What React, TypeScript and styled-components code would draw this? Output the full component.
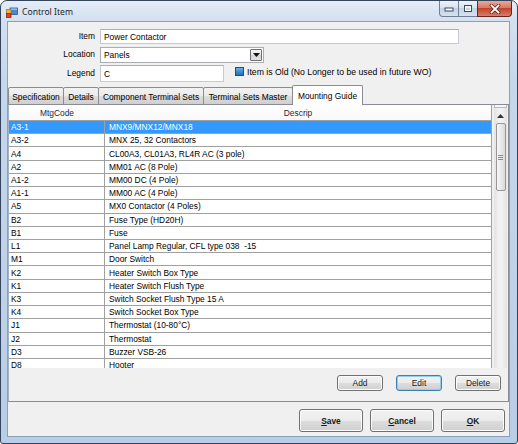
import React from "react";
import styled, { createGlobalStyle } from "styled-components";

const GlobalStyle = createGlobalStyle`
  html, body {
    margin: 0;
    padding: 0;
    background: #ffffff;
  }
  body {
    font-family: "Liberation Sans", Arial, sans-serif;
  }
`;

interface MountingRow {
  code: string;
  descrip: string;
}

const rows: MountingRow[] = [
  { code: "A3-1", descrip: "MNX9/MNX12/MNX18" },
  { code: "A3-2", descrip: "MNX 25, 32 Contactors" },
  { code: "A4", descrip: "CL00A3, CL01A3, RL4R AC (3 pole)" },
  { code: "A2", descrip: "MM01 AC (8 Pole)" },
  { code: "A1-2", descrip: "MM00 DC (4 Pole)" },
  { code: "A1-1", descrip: "MM00 AC (4 Pole)" },
  { code: "A5", descrip: "MX0 Contactor (4 Poles)" },
  { code: "B2", descrip: "Fuse Type (HD20H)" },
  { code: "B1", descrip: "Fuse" },
  { code: "L1", descrip: "Panel Lamp Regular, CFL type 038  -15" },
  { code: "M1", descrip: "Door Switch" },
  { code: "K2", descrip: "Heater Switch Box Type" },
  { code: "K1", descrip: "Heater Switch Flush Type" },
  { code: "K3", descrip: "Switch Socket Flush Type 15 A" },
  { code: "K4", descrip: "Switch Socket Box Type" },
  { code: "J1", descrip: "Thermostat (10-80°C)" },
  { code: "J2", descrip: "Thermostat" },
  { code: "D3", descrip: "Buzzer VSB-26" },
  { code: "D8", descrip: "Hooter" },
];

const tabs = [
  { title: "Specification", width: 56 },
  { title: "Details", width: 36 },
  { title: "Component Terminal Sets", width: 106 },
  { title: "Terminal Sets Master", width: 90 },
  { title: "Mounting Guide", width: 71 },
];

const selectedTab = "Mounting Guide";

export default function App() {
  return (
    <>
      <GlobalStyle />
      <Window>
        <TitleBar>
          <AppIcon />
          <Title>Control Item</Title>
          <CaptionButtons>
            <CaptionButton $kind="min">
              <svg width="10" height="6" viewBox="0 0 10 6">
                <rect x="1" y="2" width="8" height="3" fill="#ffffff" stroke="#3b4a5e" strokeWidth="1" />
              </svg>
            </CaptionButton>
            <CaptionButton $kind="max">
              <svg width="10" height="9" viewBox="0 0 10 9">
                <rect x="1.5" y="1.5" width="7" height="6" fill="none" stroke="#3b4a5e" strokeWidth="1" />
                <rect x="2.5" y="3" width="5" height="3.5" fill="none" stroke="#ffffff" strokeWidth="1" />
              </svg>
            </CaptionButton>
            <CaptionButton $kind="close">
              <svg width="12" height="10" viewBox="0 0 12 10">
                <path d="M2.5 1.5 L9.5 8.5 M9.5 1.5 L2.5 8.5" stroke="#5a1d12" strokeWidth="3.2" strokeLinecap="square" />
                <path d="M2.5 1.5 L9.5 8.5 M9.5 1.5 L2.5 8.5" stroke="#ffffff" strokeWidth="1.8" strokeLinecap="square" />
              </svg>
            </CaptionButton>
          </CaptionButtons>
        </TitleBar>

        <Client>
          <FormGrid>
            <FieldLabel>Item</FieldLabel>
            <TextBox $width={359}>Power Contactor</TextBox>

            <FieldLabel>Location</FieldLabel>
            <Combo>
              <ComboText>Panels</ComboText>
              <ComboButton>
                <svg width="7" height="4" viewBox="0 0 7 4">
                  <path d="M0 0 L7 0 L3.5 4 Z" fill="#111" />
                </svg>
              </ComboButton>
            </Combo>

            <FieldLabel>Legend</FieldLabel>
            <LegendRow>
              <TextBox $width={124}>C</TextBox>
              <CheckBox />
              <CheckLabel>Item is Old (No Longer to be used in future WO)</CheckLabel>
            </LegendRow>
          </FormGrid>

          <TabStrip>
            {tabs.map((t) => (
              <Tab key={t.title} $width={t.width} $active={t.title === selectedTab}>
                {t.title}
              </Tab>
            ))}
          </TabStrip>

          <TabPanel>
            <GridArea>
              <Table>
                <HeaderRow>
                  <HeaderCell>MtgCode</HeaderCell>
                  <HeaderCell>Descrip</HeaderCell>
                </HeaderRow>
                <Body>
                  {rows.map((r, i) => (
                    <Row key={r.code} $selected={i === 0}>
                      <Cell $first>{r.code}</Cell>
                      <Cell>{r.descrip}</Cell>
                    </Row>
                  ))}
                </Body>
              </Table>
              <ScrollBar>
                <ScrollTop />
                <ScrollArrow>
                  <svg width="7" height="4" viewBox="0 0 7 4">
                    <path d="M0 4 L7 4 L3.5 0 Z" fill="#333" />
                  </svg>
                </ScrollArrow>
                <Thumb>
                  <Grip />
                  <Grip />
                  <Grip />
                </Thumb>
              </ScrollBar>
            </GridArea>
            <GridButtons>
              <SmallButton>Add</SmallButton>
              <SmallButton $focused>Edit</SmallButton>
              <SmallButton>Delete</SmallButton>
            </GridButtons>
          </TabPanel>

          <Footer>
            <DialogButton>
              <u>S</u>ave
            </DialogButton>
            <DialogButton>
              <u>C</u>ancel
            </DialogButton>
            <DialogButton>
              <u>O</u>K
            </DialogButton>
          </Footer>
        </Client>
      </Window>
    </>
  );
}

const AppIcon: React.FC = () => (
  <IconBox>
    <svg width="12" height="11" viewBox="0 0 12 11">
      <rect x="4" y="1" width="7.5" height="6.5" fill="#4f86c9" stroke="#2d5a94" strokeWidth="0.8" />
      <rect x="4.5" y="1.5" width="6.5" height="1.4" fill="#9cc2ec" />
      <rect x="0.5" y="2.5" width="4.5" height="4" fill="#f2b233" stroke="#b87a12" strokeWidth="0.8" />
      <rect x="0.5" y="6.5" width="4.5" height="4" fill="#d9442e" stroke="#8d2416" strokeWidth="0.8" />
    </svg>
  </IconBox>
);

const Window = styled.div`
  width: 518px;
  height: 444px;
  box-sizing: border-box;
  display: flex;
  flex-direction: column;
  border: 1px solid #34445a;
  border-radius: 7px 7px 3px 3px;
  overflow: hidden;
  background: linear-gradient(180deg, #e4edf8 0px, #d3e0f0 20px, #c6d7eb 80px, #b8cde6 100%);
`;

const TitleBar = styled.div`
  height: 20px;
  display: flex;
  align-items: center;
  flex-shrink: 0;
`;

const IconBox = styled.div`
  width: 12px;
  height: 11px;
  margin: 2px 4px 0 5px;
  display: flex;
`;

const Title = styled.div`
  font-family: "Noto Sans", "Open Sans", sans-serif;
  font-size: 8.6px;
  color: #1e1e1e;
  margin-top: 1px;
  flex: 1;
`;

const CaptionButtons = styled.div`
  display: flex;
  align-self: flex-start;
  margin-right: 5px;
`;

const CaptionButton = styled.div<{ $kind: "min" | "max" | "close" }>`
  width: ${(p) => (p.$kind === "close" ? 35 : 20)}px;
  height: 16px;
  box-sizing: border-box;
  display: flex;
  align-items: center;
  justify-content: center;
  border: 1px solid ${(p) => (p.$kind === "close" ? "#6b2519" : "#6e7f96")};
  border-top: none;
  margin-left: ${(p) => (p.$kind === "min" ? 0 : -1)}px;
  border-radius: ${(p) =>
    p.$kind === "min" ? "0 0 0 4px" : p.$kind === "close" ? "0 0 4px 0" : "0"};
  background: ${(p) =>
    p.$kind === "close"
      ? "linear-gradient(180deg, #e9a898 0%, #d77a64 45%, #c2432d 50%, #d6806a 100%)"
      : "linear-gradient(180deg, #eef3f9 0%, #d8e3f0 45%, #c3d3e6 50%, #d6e2ef 100%)"};
`;

const Client = styled.div`
  flex: 1;
  margin: 0 7px 6px 6px;
  border: 1px solid #8aa0bb;
  background: #f0f0f0;
  display: flex;
  flex-direction: column;
  font-size: 8.4px;
  color: #000;
  min-height: 0;
`;

const FormGrid = styled.div`
  display: grid;
  grid-template-columns: 87px 1fr;
  grid-template-rows: 15px 17px 17px;
  column-gap: 5px;
  row-gap: 2px;
  padding-top: 7px;
  align-items: center;
`;

const FieldLabel = styled.div`
  text-align: right;
  line-height: 11px;
`;

const TextBox = styled.div<{ $width: number }>`
  width: ${(p) => p.$width}px;
  height: 100%;
  box-sizing: border-box;
  background: #ffffff;
  border: 1px solid #c5cad3;
  border-top-color: #abadb3;
  padding-left: 3px;
  display: flex;
  align-items: center;
`;

const Combo = styled.div`
  width: 164px;
  height: 16px;
  box-sizing: border-box;
  background: #ffffff;
  border: 1px solid #abadb3;
  display: flex;
  align-items: stretch;
`;

const ComboText = styled.div`
  flex: 1;
  padding-left: 3px;
  display: flex;
  align-items: center;
`;

const ComboButton = styled.div`
  width: 12px;
  margin: 1px;
  box-sizing: border-box;
  border: 1px solid #707070;
  border-radius: 1px;
  background: linear-gradient(180deg, #f4f4f4 0%, #e6e6e6 50%, #d6d6d6 51%, #e2e2e2 100%);
  display: flex;
  align-items: center;
  justify-content: center;
`;

const LegendRow = styled.div`
  display: flex;
  align-items: center;
  height: 100%;
`;

const CheckBox = styled.div`
  width: 9px;
  height: 9px;
  box-sizing: border-box;
  margin: -5px 0 0 11px;
  border: 1px solid #1d4e7f;
  background: linear-gradient(180deg, #6fb2e6 0%, #3c89cc 55%, #2b6fb0 100%);
`;

const CheckLabel = styled.div`
  margin: -4px 0 0 3px;
  white-space: nowrap;
  font-size: 8.7px;
`;

const TabStrip = styled.div`
  display: flex;
  align-items: flex-end;
  height: 20px;
  margin-top: 3px;
  margin-bottom: -1px;
  position: relative;
  z-index: 1;
`;

const Tab = styled.div<{ $width: number; $active?: boolean }>`
  width: ${(p) => p.$width}px;
  height: ${(p) => (p.$active ? 20 : 18)}px;
  box-sizing: border-box;
  margin-left: -1px;
  border: 1px solid #898c95;
  border-bottom: ${(p) => (p.$active ? "none" : "1px solid #898c95")};
  border-radius: 2px 2px 0 0;
  background: ${(p) =>
    p.$active ? "#ffffff" : "linear-gradient(180deg, #f2f2f2 0%, #ebebeb 50%, #dddddd 51%, #cfcfcf 100%)"};
  display: flex;
  align-items: center;
  justify-content: center;
  white-space: nowrap;
  padding-top: ${(p) => (p.$active ? 0 : 1)}px;

  &:first-child {
    margin-left: 0;
  }
`;

const TabPanel = styled.div`
  flex: 1;
  min-height: 0;
  border: 1px solid #898c95;
  border-left-color: #a3b3c6;
  background: #f0f0f0;
  display: flex;
  flex-direction: column;
`;

const GridArea = styled.div`
  flex: 1;
  min-height: 0;
  display: flex;
  overflow: hidden;
`;

const Table = styled.div`
  flex: 1;
  display: flex;
  flex-direction: column;
  background: #ffffff;
  border-right: 1px solid #a0a0a0;
  min-width: 0;
`;

const HeaderRow = styled.div`
  display: grid;
  grid-template-columns: 96px 1fr;
  height: 16px;
  flex-shrink: 0;
  box-sizing: border-box;
  border-bottom: 1px solid #a0a0a0;
  background: linear-gradient(180deg, #ffffff 0%, #f7f8fa 100%);
`;

const HeaderCell = styled.div`
  display: flex;
  align-items: center;
  justify-content: center;
  color: #1e2a3a;
  padding-top: 1px;
`;

const Body = styled.div`
  flex: 1;
  overflow: hidden;
`;

const Row = styled.div<{ $selected?: boolean }>`
  display: grid;
  grid-template-columns: 96px 1fr;
  height: 13.22px;
  box-sizing: border-box;
  border-bottom: 1px solid #a0a0a0;
  background: ${(p) => (p.$selected ? "#3399ff" : "#ffffff")};
  color: ${(p) => (p.$selected ? "#ffffff" : "#000000")};
`;

const Cell = styled.div<{ $first?: boolean }>`
  padding-left: ${(p) => (p.$first ? 2 : 4)}px;
  border-right: ${(p) => (p.$first ? "1px solid #a0a0a0" : "none")};
  display: flex;
  align-items: center;
  white-space: pre;
  overflow: hidden;
`;

const ScrollBar = styled.div`
  width: 13px;
  margin: 0 1px 0 2px;
  flex-shrink: 0;
  display: flex;
  flex-direction: column;
  align-items: center;
  background: linear-gradient(90deg, #e3e3e3 0%, #f2f2f2 40%, #f2f2f2 60%, #e3e3e3 100%);
`;

const ScrollTop = styled.div`
  width: 100%;
  height: 3px;
  box-sizing: border-box;
  border: 1px solid #b9b9b9;
  border-top: none;
  background: #f7f7f7;
`;

const ScrollArrow = styled.div`
  width: 100%;
  height: 15px;
  display: flex;
  align-items: center;
  justify-content: center;
`;

const Thumb = styled.div`
  width: 10px;
  height: 68px;
  box-sizing: border-box;
  border: 1px solid #979797;
  border-radius: 2px;
  background: linear-gradient(90deg, #f5f5f5 0%, #e9e9e9 50%, #d9d9d9 100%);
  display: flex;
  flex-direction: column;
  align-items: center;
  justify-content: center;
  gap: 1px;
`;

const Grip = styled.div`
  width: 5px;
  height: 1px;
  background: #8c8c8c;
`;

const GridButtons = styled.div`
  height: 33px;
  flex-shrink: 0;
  display: flex;
  justify-content: flex-end;
  align-items: flex-start;
  gap: 13px;
  padding: 7px 7px 0 0;
  box-sizing: border-box;
`;

const SmallButton = styled.div<{ $focused?: boolean }>`
  width: 46px;
  height: 16px;
  box-sizing: border-box;
  border: 1px solid ${(p) => (p.$focused ? "#3c7fb1" : "#707070")};
  border-radius: 3px;
  box-shadow: ${(p) => (p.$focused ? "inset 0 0 0 1px #8fd0f2" : "inset 0 0 0 1px #fcfcfc")};
  background: linear-gradient(180deg, #f2f2f2 0%, #ebebeb 50%, #dddddd 51%, #cfcfcf 100%);
  display: flex;
  align-items: center;
  justify-content: center;
  color: #1a1a1a;
`;

const Footer = styled.div`
  height: 34px;
  flex-shrink: 0;
  display: flex;
  justify-content: flex-end;
  align-items: flex-start;
  gap: 7px;
  padding: 7px 4px 0 0;
  box-sizing: border-box;
`;

const DialogButton = styled.div`
  width: 64px;
  height: 23px;
  box-sizing: border-box;
  border: 1px solid #707070;
  border-radius: 3px;
  box-shadow: inset 0 0 0 1px #fcfcfc;
  background: linear-gradient(180deg, #f2f2f2 0%, #ebebeb 50%, #dddddd 51%, #cfcfcf 100%);
  display: flex;
  align-items: center;
  justify-content: center;
  font-weight: bold;
  color: #1a1a1a;
`;
